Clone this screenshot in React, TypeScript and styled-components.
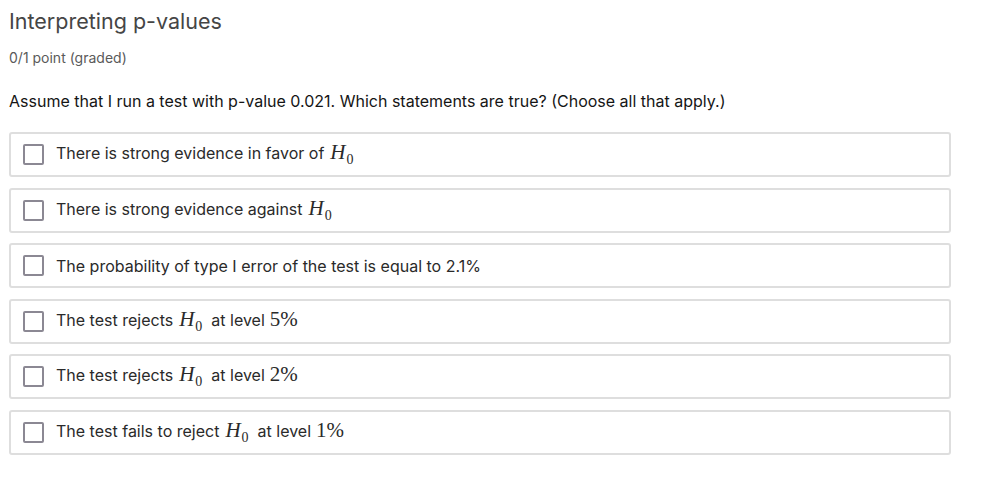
import styled, { createGlobalStyle } from "styled-components";

const GlobalStyle = createGlobalStyle`
    body {
        margin: 0;
        background: #fff;
        font-family: Inter, "Noto Sans", sans-serif;
        color: #111;
    }
`

const options: { text: string; math?: string; tail?: string; level?: string }[] = [
    { text: "There is strong evidence in favor of", math: "H" },
    { text: "There is strong evidence against", math: "H" },
    { text: "The probability of type I error of the test is equal to 2.1%" },
    { text: "The test rejects", math: "H", tail: "at level", level: "5%" },
    { text: "The test rejects", math: "H", tail: "at level", level: "2%" },
    { text: "The test fails to reject", math: "H", tail: "at level", level: "1%" },
]

function App() {
    return (
        <Page>
            <GlobalStyle />
            <Title>Interpreting p-values</Title>
            <Points>0/1 point (graded)</Points>
            <Question>Assume that I run a test with p-value 0.021. Which statements are true? (Choose all that apply.)</Question>
            <Choices>
                {options.map((o, i) => (
                    <Choice key={i}>
                        <Box type="checkbox" />
                        <Label>
                            {o.text}
                            {o.math && (
                                <Math>
                                    <Var>{o.math}</Var>
                                    <Sub>0</Sub>
                                </Math>
                            )}
                            {o.tail && <span>{o.tail}</span>}
                            {o.level && <Num>{o.level}</Num>}
                        </Label>
                    </Choice>
                ))}
            </Choices>
        </Page>
    )
}

export default App

const Page = styled.div`
    padding: 7px 9px;
    width: 942px;
`

const Title = styled.h2`
    margin: 0;
    font-size: 21.5px;
    font-weight: 400;
    color: #454545;
    line-height: 28px;
`

const Points = styled.div`
    margin-top: 14px;
    font-size: 14px;
    color: #5a5a5a;
    line-height: 18px;
`

const Question = styled.p`
    margin: 24px 0 0;
    font-size: 16px;
    line-height: 20px;
    color: #151515;
`

const Choices = styled.div`
    margin-top: 21px;
    display: flex;
    flex-direction: column;
    gap: 10.5px;
`

const Choice = styled.label`
    display: flex;
    align-items: center;
    gap: 12px;
    height: 45px;
    box-sizing: border-box;
    padding: 0 12px;
    border: 2px solid #dedede;
    border-radius: 3px;
`

const Box = styled.input`
    appearance: none;
    margin: 0;
    width: 21px;
    height: 21px;
    box-sizing: border-box;
    border: 2px solid #8b8893;
    border-radius: 2px;
    background: #fff;
`

const Label = styled.span`
    display: flex;
    align-items: baseline;
    gap: 5px;
    font-size: 16px;
    color: #2a2a2a;
`

const Math = styled.span`
    font-family: "Liberation Serif", serif;
    font-size: 21px;
    line-height: 1;
    margin: 0 4px 0 1px;
`

const Var = styled.i`
    font-style: italic;
`

const Sub = styled.sub`
    font-size: 14px;
    vertical-align: -5px;
    margin-left: 1px;
`

const Num = styled.span`
    font-family: "Liberation Serif", serif;
    font-size: 21px;
    line-height: 1;
`
